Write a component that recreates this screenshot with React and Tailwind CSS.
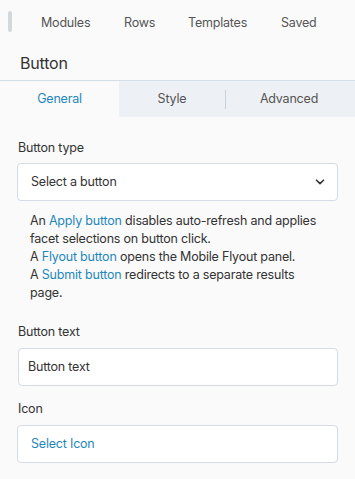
import React from "react";

export default function App() {
  const link = "text-[#1f87bd]";
  return (
    <div className="w-[355px] h-[479px] bg-[#fafafa] text-[#333] overflow-hidden tracking-[-0.2px]" style={{ fontFamily: "Inter, 'Liberation Sans', sans-serif" }}>
      {/* top nav */}
      <div className="relative h-[46px] flex items-center text-[12.5px] text-[#555]">
        <div className="absolute left-[8px] top-[11px] w-[4px] h-[21px] rounded-full bg-[#d3d8dd]" />
        <div className="flex w-full pl-[41px] pt-[1px]">
          <span className="w-[83px]">Modules</span>
          <span className="w-[64px]">Rows</span>
          <span className="w-[93px]">Templates</span>
          <span>Saved</span>
        </div>
      </div>
      <div className="h-[34px] pl-[20px] pt-[5px] text-[16px] text-[#333]">Button</div>
      {/* tabs */}
      <div className="flex h-[37px] border-t border-[#d3dde8] text-[12.5px]">
        <div className="w-[119px] flex items-center justify-center text-[#1f87bd] bg-[#fafafa]">General</div>
        <div className="w-[106px] flex items-center justify-center bg-[#edf0f4] text-[#555]">
          Style
        </div>
        <div className="flex-1 flex items-center bg-[#edf0f4] text-[#555]">
          <div className="w-px h-[19px] bg-[#c7d2de]" />
          <div className="flex-1 text-center pr-[3px]">Advanced</div>
        </div>
      </div>
      {/* content */}
      <div className="px-[17px] pt-[22px] text-[12.5px]">
        <div className="pl-[1px] leading-[18px]">Button type</div>
        <div className="mt-[6px] h-[38px] bg-white border border-[#d3dbe6] rounded-[4px] flex items-center justify-between pl-[13px] pr-[12px]">
          <span>Select a button</span>
          <svg width="10" height="6" viewBox="0 0 10 6" fill="none" stroke="#333" strokeWidth="1.6" strokeLinecap="round" strokeLinejoin="round">
            <path d="M1.5 1.2 L5 4.6 L8.5 1.2" />
          </svg>
        </div>
        <div className="mt-[11px] pl-[13px] pr-[10px] leading-[18px]">
          <div>
            An <span className={link}>Apply button</span> disables auto-refresh and applies facet selections on button click.
          </div>
          <div>
            A <span className={link}>Flyout button</span> opens the Mobile Flyout panel.
          </div>
          <div>
            A <span className={link}>Submit button</span> redirects to a separate results page.
          </div>
        </div>
        <div className="mt-[21px] pl-[1px] leading-[18px]">Button text</div>
        <div className="mt-[7px] h-[38px] bg-white border border-[#d3dbe6] rounded-[4px] flex items-center pl-[9px] ml-[1px]">
          Button text
        </div>
        <div className="mt-[14px] pl-[1px] leading-[18px]">Icon</div>
        <div className="mt-[7px] h-[38px] bg-white border border-[#d3dbe6] rounded-[4px] flex items-center pl-[13px]">
          <span className={link}>Select Icon</span>
        </div>
      </div>
    </div>
  );
}
